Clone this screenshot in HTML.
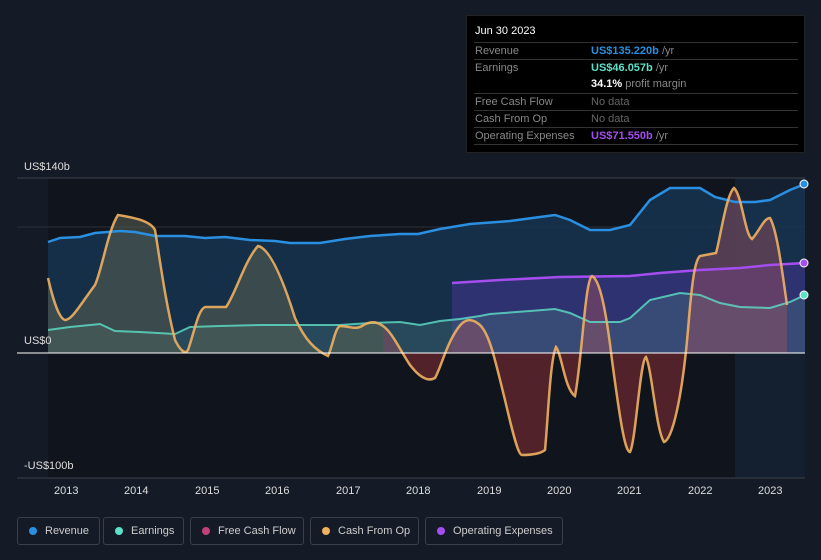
<!DOCTYPE html>
<html><head><meta charset="utf-8"><style>
body{margin:0;width:821px;height:560px;background:#151b26;font-family:"Liberation Sans",sans-serif;overflow:hidden;position:relative}
.tt{position:absolute;left:466px;top:15px;width:339px;height:138px;background:#000;border:1px solid #222;box-sizing:border-box;font-size:11px;color:#888}
.tt .h{position:absolute;left:8px;top:9px;color:#fff;font-size:11px}
.row{position:absolute;left:7px;width:324px;border-top:1px solid #333;height:17px;line-height:16px}
.row span.l{position:absolute;left:1px}
.row span.v{position:absolute;left:117px}
.lg{position:absolute;top:517px;height:28px;border:1px solid #3a404a;border-radius:3px;box-sizing:border-box;font-size:11px;color:#ccc;line-height:26px;padding-left:27px}
.lg i{position:absolute;left:11px;top:9px;width:8px;height:8px;border-radius:50%}
.ax{position:absolute;font-size:11px;color:#ddd}
</style></head><body>
<svg width="821" height="560" style="position:absolute;left:0;top:0">
<rect x="48" y="178" width="687" height="300" fill="#10141c"/>
<rect x="735" y="178" width="70" height="300" fill="#142030"/>
<line x1="17" y1="178" x2="805" y2="178" stroke="#3a404a"/>
<line x1="17" y1="227" x2="805" y2="227" stroke="#2a303a"/>
<line x1="17" y1="478" x2="805" y2="478" stroke="#3a404a"/>
<path d="M48,242 L60,238 80,237 95,233 120,231 135,232 155,236 185,236 205,238 225,237 250,240 275,241 290,243 320,243 345,239 370,236 400,234 418,234 440,229 470,224 510,221 540,217 555,215 570,220 590,230 610,230 630,225 650,200 670,188 700,188 715,197 735,202 755,202 770,200 790,190 805,184 L805,353 L48,353Z" fill="#163450" opacity="0.85"/>
<path d="M452,283 L500,280 560,277 630,276 660,273 700,270 740,268 770,265 805,263 L805,353 452,353Z" fill="#35337a" opacity="0.8"/>
<path d="M48,330 L70,327 100,324 115,331 140,332 175,334 190,327 220,326 260,325 300,325 340,325 370,323 400,322 420,325 440,321 460,319 480,316 490,314 530,311 555,309 570,313 590,322 620,322 630,318 650,300 680,293 700,295 720,303 740,307 770,308 790,302 805,295 L805,353 48,353Z" fill="#4a7a80" opacity="0.35"/>
<path id="cf" d="M48,278 C52,295 58,318 65,320 C72,320 80,305 95,285 C102,270 108,230 118,215 C130,217 150,220 155,230 C160,260 165,300 175,340 C180,350 185,355 188,350 C195,330 198,310 205,307 L226,307 C235,295 245,260 258,246 C268,248 280,270 295,318 C305,340 315,350 328,356 C333,345 335,328 340,326 C348,326 355,330 362,326 C368,322 375,320 383,326 C392,332 400,350 410,365 C420,378 428,382 435,378 C442,365 446,345 458,328 C465,318 472,318 480,325 C490,335 495,360 505,400 C512,430 518,455 522,455 C530,455 540,454 545,450 C548,420 550,360 556,347 C562,355 565,390 575,396 C582,360 585,280 592,276 C600,280 606,310 612,360 C620,420 625,452 630,452 C636,440 640,360 646,357 C652,370 656,430 664,442 C672,440 682,400 688,330 C692,280 695,260 700,256 L716,253 C720,240 726,195 734,188 C742,195 745,235 752,239 C760,230 764,218 770,218 C777,230 782,270 787,305" fill="none"/>
<clipPath id="pos"><rect x="0" y="0" width="821" height="353"/></clipPath>
<clipPath id="neg"><rect x="0" y="353" width="821" height="200"/></clipPath>
<path d="M48,278 C52,295 58,318 65,320 C72,320 80,305 95,285 C102,270 108,230 118,215 C130,217 150,220 155,230 C160,260 165,300 175,340 C180,350 185,355 188,350 C195,330 198,310 205,307 L226,307 C235,295 245,260 258,246 C268,248 280,270 295,318 C305,340 315,350 328,356 C333,345 335,328 340,326 C348,326 355,330 362,326 C368,322 375,320 383,326 L383,353 48,353Z" fill="#5a6052" opacity="0.55" clip-path="url(#pos)"/>
<path d="M383,326 C392,332 400,350 410,365 C420,378 428,382 435,378 C442,365 446,345 458,328 C465,318 472,318 480,325 C490,335 495,360 505,400 C512,430 518,455 522,455 C530,455 540,454 545,450 C548,420 550,360 556,347 C562,355 565,390 575,396 C582,360 585,280 592,276 C600,280 606,310 612,360 C620,420 625,452 630,452 C636,440 640,360 646,357 C652,370 656,430 664,442 C672,440 682,400 688,330 C692,280 695,260 700,256 L716,253 C720,240 726,195 734,188 C742,195 745,235 752,239 C760,230 764,218 770,218 C777,230 782,270 787,305 L787,353 383,353Z" fill="#a05060" opacity="0.45" clip-path="url(#pos)"/>
<path d="M383,326 C392,332 400,350 410,365 C420,378 428,382 435,378 C442,365 446,345 458,328 C465,318 472,318 480,325 C490,335 495,360 505,400 C512,430 518,455 522,455 C530,455 540,454 545,450 C548,420 550,360 556,347 C562,355 565,390 575,396 C582,360 585,280 592,276 C600,280 606,310 612,360 C620,420 625,452 630,452 C636,440 640,360 646,357 C652,370 656,430 664,442 C672,440 682,400 688,330 L688,353 383,353Z" fill="#52222a" clip-path="url(#neg)"/>
<path d="M48,242 L60,238 80,237 95,233 120,231 135,232 155,236 185,236 205,238 225,237 250,240 275,241 290,243 320,243 345,239 370,236 400,234 418,234 440,229 470,224 510,221 540,217 555,215 570,220 590,230 610,230 630,225 650,200 670,188 700,188 715,197 735,202 755,202 770,200 790,190 805,184" fill="none" stroke="#2a8fe0" stroke-width="2.5"/>
<path d="M48,330 L70,327 100,324 115,331 140,332 175,334 190,327 220,326 260,325 300,325 340,325 370,323 400,322 420,325 440,321 460,319 480,316 490,314 530,311 555,309 570,313 590,322 620,322 630,318 650,300 680,293 700,295 720,303 740,307 770,308 790,302 805,295" fill="none" stroke="#5ee0c8" stroke-width="2" opacity="0.8"/>
<path d="M452,283 L500,280 560,277 630,276 660,273 700,270 740,268 770,265 805,263" fill="none" stroke="#a54ef0" stroke-width="2.5"/>
<use href="#cf" stroke="#f0b060" stroke-width="2.5" opacity="0.9"/>
<line x1="17" y1="353" x2="805" y2="353" stroke="#fff" stroke-width="1"/>
<circle cx="804" cy="184" r="4" fill="#2a8fe0" stroke="#fff" stroke-width="1"/>
<circle cx="804" cy="263" r="4" fill="#a54ef0" stroke="#fff" stroke-width="1"/>
<circle cx="804" cy="295" r="4" fill="#5ee0c8" stroke="#fff" stroke-width="1"/>
</svg>
<div class="ax" style="left:24px;top:161px">US$140b</div>
<div class="ax" style="left:24px;top:335px">US$0</div>
<div class="ax" style="left:24px;top:460px">-US$100b</div>
<div class="ax" style="left:54px;top:485px">2013</div><div class="ax" style="left:124px;top:485px">2014</div><div class="ax" style="left:195px;top:485px">2015</div><div class="ax" style="left:265px;top:485px">2016</div><div class="ax" style="left:336px;top:485px">2017</div><div class="ax" style="left:406px;top:485px">2018</div><div class="ax" style="left:477px;top:485px">2019</div><div class="ax" style="left:547px;top:485px">2020</div><div class="ax" style="left:617px;top:485px">2021</div><div class="ax" style="left:688px;top:485px">2022</div><div class="ax" style="left:758px;top:485px">2023</div>
<div class="tt">
<div class="h">Jun 30 2023</div>
<div class="row" style="top:26px"><span class="l">Revenue</span><span class="v"><b style="color:#2a8fe0">US$135.220b</b> /yr</span></div>
<div class="row" style="top:43px"><span class="l">Earnings</span><span class="v"><b style="color:#5ee0c8">US$46.057b</b> /yr</span></div>
<div class="row" style="top:60px;border-top:none"><span class="v"><b style="color:#fff">34.1%</b> profit margin</span></div>
<div class="row" style="top:77px"><span class="l">Free Cash Flow</span><span class="v" style="color:#666">No data</span></div>
<div class="row" style="top:94px"><span class="l">Cash From Op</span><span class="v" style="color:#666">No data</span></div>
<div class="row" style="top:111px"><span class="l">Operating Expenses</span><span class="v"><b style="color:#a54ef0">US$71.550b</b> /yr</span></div>
<div class="row" style="top:128px;height:0"></div>
</div>
<div class="lg" style="left:17px;width:83px"><i style="background:#2a8fe0"></i>Revenue</div>
<div class="lg" style="left:103px;width:81px"><i style="background:#5ee0c8"></i>Earnings</div>
<div class="lg" style="left:190px;width:114px"><i style="background:#c0407a"></i>Free Cash Flow</div>
<div class="lg" style="left:310px;width:109px"><i style="background:#f0b060"></i>Cash From Op</div>
<div class="lg" style="left:425px;width:138px"><i style="background:#a54ef0"></i>Operating Expenses</div>
</body></html>
